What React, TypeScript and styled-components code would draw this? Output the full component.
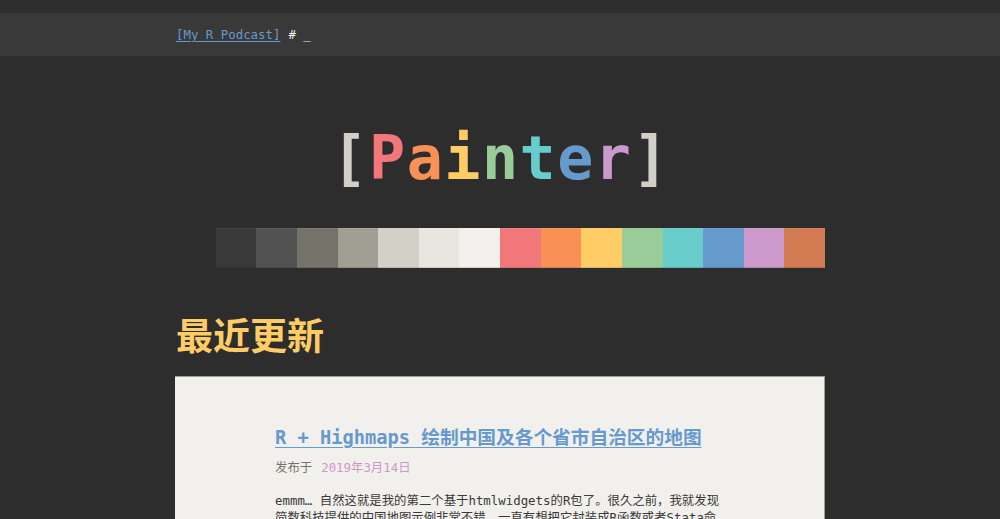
import React from "react";
import styled, { createGlobalStyle } from "styled-components";

const GlobalStyle = createGlobalStyle`
  html, body {
    margin: 0;
    padding: 0;
    background: #2d2d2d;
  }
  body {
    font-family: "DejaVu Sans Mono", "Noto Sans CJK SC", monospace;
    font-size: 12.4px;
    color: #d3d0c8;
  }
`;

const Page = styled.div`
  min-height: 519px;
  padding-top: 13px;
  overflow: hidden;
`;

const Header = styled.header`
  background: #393939;
  height: 43px;
`;

const Container = styled.div`
  width: 650px;
  margin: 0 auto;
`;

const HeaderInner = styled(Container)`
  display: flex;
  align-items: center;
  height: 43px;
  gap: 8px;
  padding-left: 1px;
  box-sizing: border-box;
`;

const HomeLink = styled.a`
  color: #6699cc;
  text-decoration: underline;
  text-underline-offset: 2px;
`;

const Prompt = styled.span`
  color: #f2f0ec;
`;

const Hero = styled.div`
  margin-top: 70px;
  display: flex;
  justify-content: center;
`;

const Logo = styled.h1`
  margin: 0;
  font-family: "DejaVu Sans Mono", monospace;
  font-weight: 700;
  font-size: 60px;
  line-height: 64px;
  letter-spacing: 1.5px;
  padding-left: 1.5px;
`;

const Letter = styled.span<{ $c: string }>`
  color: ${(p) => p.$c};
`;

const Palette = styled(Container)`
  margin-top: 38px;
  display: grid;
  grid-template-columns: repeat(16, 1fr);
  height: 40px;
`;

const Swatch = styled.div<{ $c: string; $flat?: boolean }>`
  background: ${(p) => p.$c};
  box-shadow: ${(p) =>
    p.$flat
      ? "none"
      : "inset 0 1px 0 rgba(255, 255, 255, 0.06), inset 0 -1px 0 rgba(0, 0, 0, 0.12)"};
`;

const SectionTitle = styled.h2`
  margin: 44px 0 0;
  font-family: "Noto Sans CJK SC", sans-serif;
  font-weight: 700;
  font-size: 37px;
  line-height: 44px;
  color: #ffcc66;
  padding-left: 1px;
`;

const Card = styled.article`
  margin-top: 20px;
  background: #f2f0ec;
  border-top: 1px solid #a09f93;
  border-right: 1px solid #a09f93;
  padding: 47px 100px 40px;
`;

const PostTitle = styled.a`
  display: block;
  font-weight: 700;
  font-size: 18.7px;
  line-height: 28px;
  color: #6699cc;
  text-decoration: underline;
  text-underline-offset: 3px;
  white-space: nowrap;
`;

const Meta = styled.div`
  margin-top: 6px;
  line-height: 20px;
  display: flex;
  gap: 9px;
`;

const MetaLabel = styled.span`
  color: #747369;
`;

const MetaDate = styled.span`
  color: #cc99cc;
`;

const Excerpt = styled.p`
  margin: 14px 0 0;
  color: #393939;
  line-height: 17px;
  width: 450px;
`;

const letters: [string, string][] = [
  ["[", "#d3d0c8"],
  ["P", "#f2777a"],
  ["a", "#f99157"],
  ["i", "#ffcc66"],
  ["n", "#99cc99"],
  ["t", "#66cccc"],
  ["e", "#6699cc"],
  ["r", "#cc99cc"],
  ["]", "#d3d0c8"],
];

const swatches = [
  "#2d2d2d",
  "#393939",
  "#515151",
  "#747369",
  "#a09f93",
  "#d3d0c8",
  "#e8e6df",
  "#f2f0ec",
  "#f2777a",
  "#f99157",
  "#ffcc66",
  "#99cc99",
  "#66cccc",
  "#6699cc",
  "#cc99cc",
  "#d27b53",
];

export default function App() {
  return (
    <>
      <GlobalStyle />
      <Page>
        <Header>
          <HeaderInner>
            <HomeLink href="#">[My R Podcast]</HomeLink>
            <Prompt># _</Prompt>
          </HeaderInner>
        </Header>
        <Hero>
          <Logo>
            {letters.map(([ch, c], i) => (
              <Letter key={i} $c={c}>
                {ch}
              </Letter>
            ))}
          </Logo>
        </Hero>
        <Palette>
          {swatches.map((c, i) => (
            <Swatch key={c} $c={c} $flat={i === 0} />
          ))}
        </Palette>
        <Container>
          <SectionTitle>最近更新</SectionTitle>
          <Card>
            <PostTitle href="#">R + Highmaps 绘制中国及各个省市自治区的地图</PostTitle>
            <Meta>
              <MetaLabel>发布于</MetaLabel>
              <MetaDate>2019年3月14日</MetaDate>
            </Meta>
            <Excerpt>
              emmm… 自然这就是我的第二个基于htmlwidgets的R包了。很久之前，我就发现简数科技提供的中国地图示例非常不错，一直有想把它封装成R函数或者Stata命令的想法，这次终于实现了。
            </Excerpt>
          </Card>
        </Container>
      </Page>
    </>
  );
}
